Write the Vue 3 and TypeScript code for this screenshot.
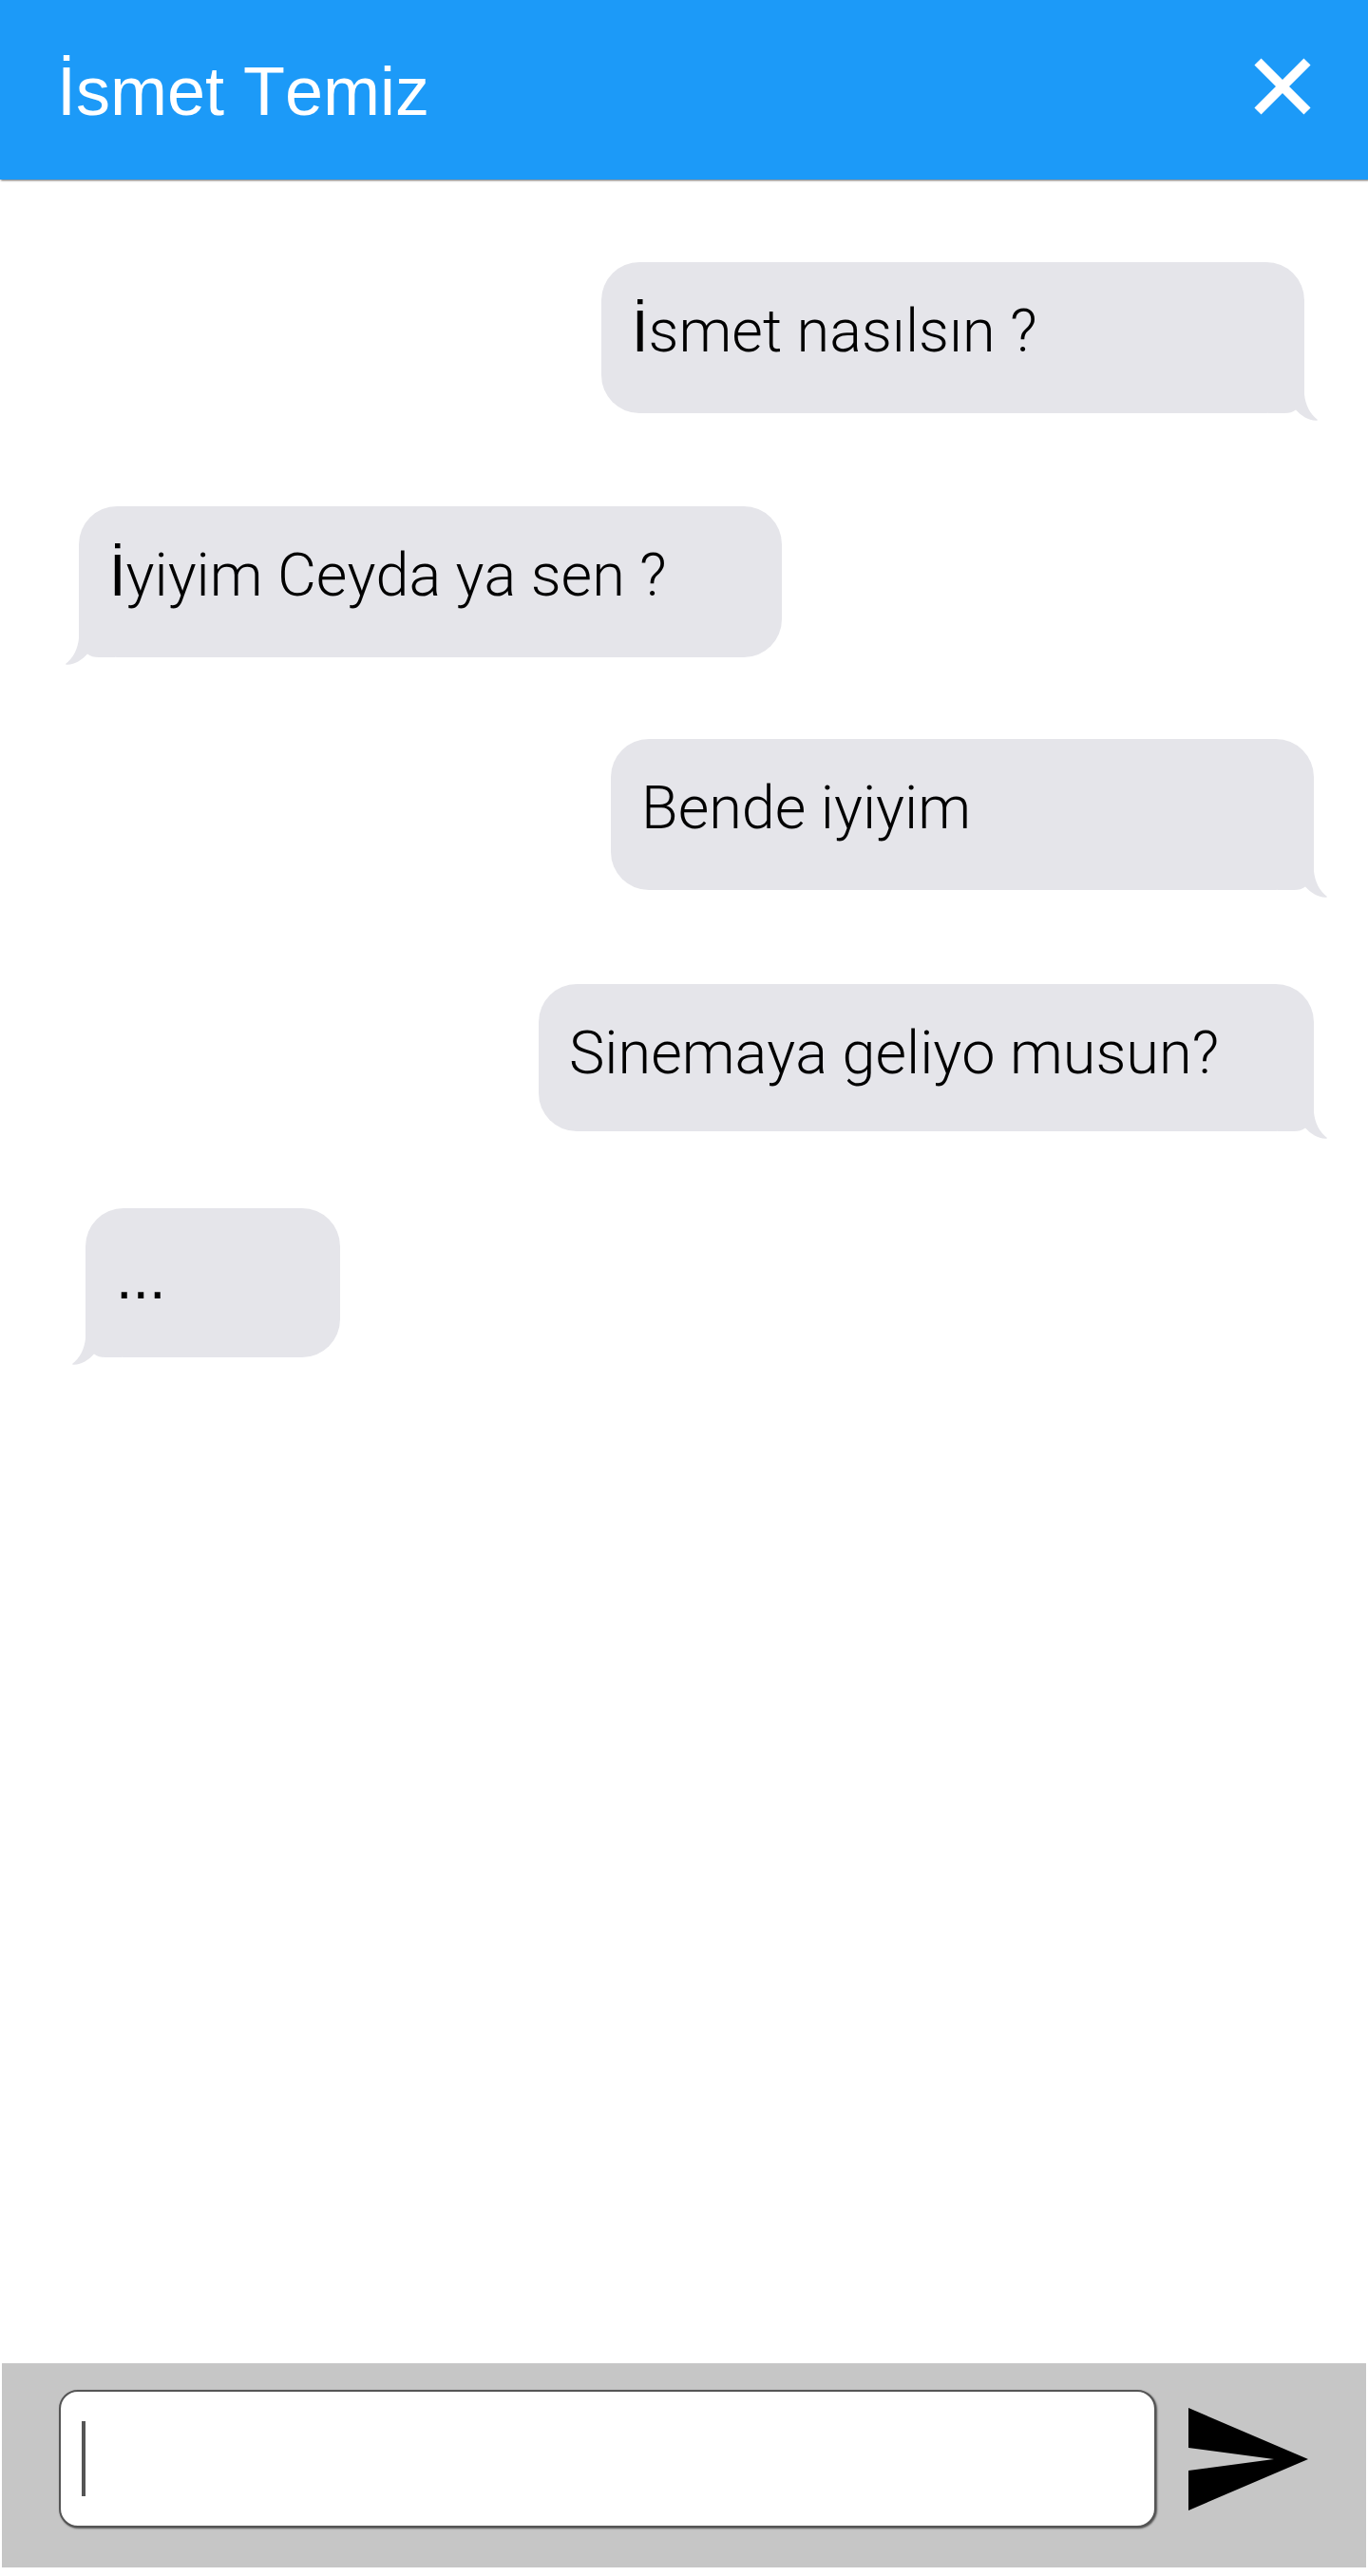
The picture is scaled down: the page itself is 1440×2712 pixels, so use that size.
<script setup lang="ts">
import { ref } from 'vue'

interface Message {
  id: number
  side: 'sent' | 'received'
  size: 'regular' | 'wide' | 'typing'
  initial?: string
  text: string
}

const contact = 'İsmet Temiz'
const draft = ref('')

const messages = ref<Message[]>([
  { id: 1, side: 'sent', size: 'regular', initial: 'İ', text: 'smet nasılsın ?' },
  { id: 2, side: 'received', size: 'regular', initial: 'İ', text: 'yiyim Ceyda ya sen ?' },
  { id: 3, side: 'sent', size: 'regular', text: 'Bende iyiyim' },
  { id: 4, side: 'sent', size: 'wide', text: 'Sinemaya geliyo musun?' },
  { id: 5, side: 'received', size: 'typing', text: '...' },
])
</script>

<template>
  <div class="chat">
    <header class="bar">
      <h1 class="name">{{ contact }}</h1>
      <button class="close" type="button" aria-label="Kapat">
        <svg viewBox="0 0 60 60" width="60" height="60" aria-hidden="true">
          <path d="M4 4 L56 56 M56 4 L4 56" fill="none" stroke="#fff" stroke-width="10" />
        </svg>
      </button>
    </header>

    <main class="thread">
      <ul class="messages">
        <li v-for="m in messages" :key="m.id" class="message" :class="[m.side, m.size]">
          <p class="text"><span v-if="m.initial" class="initial">{{ m.initial }}</span>{{ m.text }}</p>
          <svg class="tail" viewBox="0 0 52 48" width="52" height="48" aria-hidden="true">
            <path
              d="M0 0 H38 V20 C39 31 44 41 52 47 C52 47.600 51 48 50 47.800 C42 47.500 35 43 29 36.500 C26 39 22 40 17 40 H0 Z"
              fill="#e5e5ea"
            />
          </svg>
        </li>
      </ul>
    </main>

    <form class="composer" @submit.prevent>
      <div class="field">
        <input v-model="draft" class="input" type="text" aria-label="Mesaj" />
        <span v-if="!draft" class="caret" aria-hidden="true"></span>
      </div>
      <button class="send" type="submit" aria-label="Gönder">
        <svg viewBox="0 0 126 108" width="126" height="108" aria-hidden="true">
          <path d="M0 0 L126 54 L0 108 V66 L90 54 L0 42 Z" fill="#000" />
        </svg>
      </button>
    </form>
  </div>
</template>

<style>
body {
  margin: 0;
  background: #fff;
}
</style>

<style scoped>
.chat {
  display: flex;
  flex-direction: column;
  min-height: 100vh;
  font-family: 'Liberation Sans', Arial, sans-serif;
  font-kerning: none;
  color: #000;
}

.bar {
  display: flex;
  align-items: flex-start;
  justify-content: space-between;
  box-sizing: border-box;
  height: 189px;
  padding: 56px 60px 0;
  background: #1c9af8;
  box-shadow: 1px 1px 2px rgba(0, 0, 0, 0.6);
}

.name {
  margin: 0;
  font-size: 72px;
  line-height: 80px;
  font-weight: 400;
  color: #fff;
}

.close,
.send {
  flex: none;
  display: block;
  padding: 0;
  border: 0;
  background: none;
  cursor: pointer;
}

.close {
  margin-top: 5px;
}

.close svg,
.send svg {
  display: block;
}

.thread {
  flex: 1;
  padding: 87px 57px 87px 83px;
}

.messages {
  display: flex;
  flex-direction: column;
  margin: 0;
  padding: 0;
  list-style: none;
}

.message {
  position: relative;
  box-sizing: border-box;
  width: 740px;
  max-width: 100%;
  min-height: 159px;
  padding: 33px 32px 32px;
  border-radius: 40px;
  background: #e5e5ea;
}

.message.wide {
  width: 816px;
  min-height: 155px;
}

.message.typing {
  width: 268px;
  min-height: 157px;
  margin-top: 81px;
  margin-left: 7px;
}

.sent {
  align-self: flex-end;
  margin-top: 99px;
}

.sent:first-child {
  margin-top: 0;
  margin-right: 10px;
}

.received {
  align-self: flex-start;
  margin-top: 98px;
}

.received + .sent {
  margin-top: 86px;
}

.text {
  margin: 0;
  font-family: Roboto, 'Liberation Sans', sans-serif;
  font-size: 63px;
  line-height: 80px;
  font-weight: 300;
}

.initial,
.typing .text {
  font-family: 'Liberation Sans', Arial, sans-serif;
  font-weight: 400;
}

.initial {
  line-height: 1;
}

.tail {
  position: absolute;
  right: -14px;
  bottom: -8px;
}

.received .tail {
  right: auto;
  left: -14px;
  transform: scaleX(-1);
}

.composer {
  display: flex;
  align-items: center;
  gap: 34px;
  box-sizing: border-box;
  height: 215px;
  margin: 0 2px 9px;
  padding: 0 61px 14px 60px;
  background: #c6c6c6;
}

.field {
  position: relative;
  flex: 1;
  min-width: 0;
}

.input {
  display: block;
  box-sizing: border-box;
  width: 100%;
  height: 145px;
  padding: 0 24px;
  border: 2px solid #555;
  border-radius: 20px;
  background: #fff;
  box-shadow: 1px 1px 2px rgba(0, 0, 0, 0.6);
  font-family: Roboto, 'Liberation Sans', sans-serif;
  font-size: 63px;
  font-weight: 300;
  outline: none;
}

.caret {
  position: absolute;
  top: 33px;
  left: 24px;
  width: 4px;
  height: 79px;
  background: #555;
  pointer-events: none;
}
</style>
